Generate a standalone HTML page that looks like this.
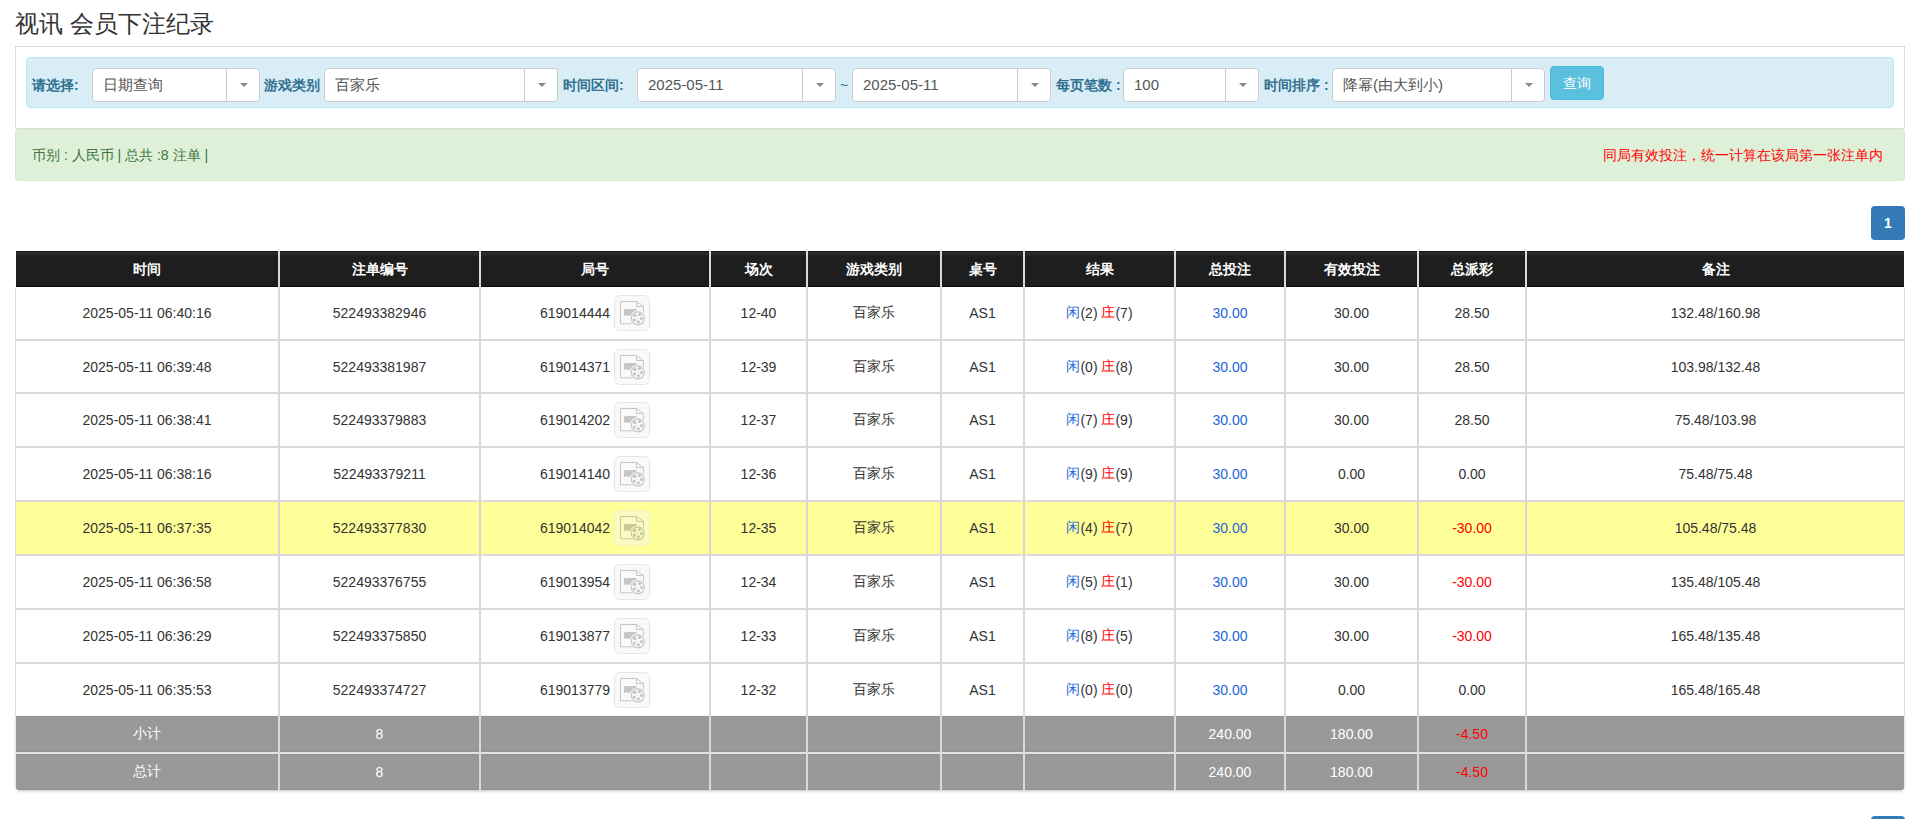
<!DOCTYPE html><html><head><meta charset="utf-8"><style>
*{box-sizing:border-box;margin:0;padding:0}
html,body{width:1913px;height:819px;overflow:hidden;background:#fff}
body{font-family:"Liberation Sans",sans-serif;color:#333;position:relative}
div,span.a{position:absolute}
.title{left:15px;top:8px;font-size:24px;line-height:32px;color:#333;white-space:nowrap}
.panel{left:15px;top:46px;width:1890px;height:83px;border:1px solid #ddd}
.bar{left:26px;top:57px;width:1868px;height:51px;background:#d9edf7;border:1px solid #bce8f1;border-radius:4px}
.lbl{font-size:14px;font-weight:bold;color:#31708f;top:76px;line-height:18px;white-space:nowrap}
.sel{top:68px;height:34px;background:#fff;border:1px solid #ccc;border-radius:4px}
.sel .t{left:10px;top:0;line-height:32px;font-size:15px;color:#555;white-space:nowrap}
.sel .d{top:0;bottom:0;width:1px;background:#ccc}
.sel .ar{top:14px;width:0;height:0;border-left:4px solid transparent;border-right:4px solid transparent;border-top:4px solid #888}
.btn{left:1550px;top:66px;width:54px;height:34px;background:#5bc0de;border:1px solid #46b8da;border-radius:4px;color:#fff;font-size:14px;line-height:32px;text-align:center}
.alert{left:15px;top:129px;width:1890px;height:52px;background:#dff0d8;border:1px solid #d6e9c6;border-radius:4px}
.alert .l{left:16px;top:16px;font-size:14px;color:#3c763d;line-height:18px;white-space:nowrap}
.alert .r{right:21px;top:16px;font-size:14px;color:#f00;line-height:18px;white-space:nowrap}
.page{left:1871px;width:34px;height:34px;background:#337ab7;border-radius:4px;color:#fff;font-size:14px;font-weight:bold;text-align:center;line-height:34px}
.c{display:flex;align-items:center;justify-content:center;white-space:nowrap;font-size:14px;color:#333}
.hd{background:#1c1c1c;color:#fff;font-weight:bold}
.b{color:#1a66d9}.rd{color:#f00}
.g{color:#fff}
.hdt{color:#fff;font-weight:bold}
</style></head><body>
<div class="title">视讯 会员下注纪录</div>
<div class="panel"></div><div class="bar"></div>
<div class="lbl" style="left:32px">请选择:</div>
<div class="sel" style="left:92px;width:168px"><div class="t">日期查询</div><div class="d" style="left:133px"></div><span class="a ar" style="left:147px"></span></div>
<div class="lbl" style="left:264px">游戏类别</div>
<div class="sel" style="left:324px;width:234px"><div class="t">百家乐</div><div class="d" style="left:199px"></div><span class="a ar" style="left:213px"></span></div>
<div class="lbl" style="left:563px">时间区间:</div>
<div class="sel" style="left:637px;width:199px"><div class="t">2025-05-11</div><div class="d" style="left:164px"></div><span class="a ar" style="left:178px"></span></div>
<div class="lbl" style="left:840px;font-weight:normal">~</div>
<div class="sel" style="left:852px;width:199px"><div class="t">2025-05-11</div><div class="d" style="left:164px"></div><span class="a ar" style="left:178px"></span></div>
<div class="lbl" style="left:1056px">每页笔数 :</div>
<div class="sel" style="left:1123px;width:136px"><div class="t">100</div><div class="d" style="left:101px"></div><span class="a ar" style="left:115px"></span></div>
<div class="lbl" style="left:1264px">时间排序 :</div>
<div class="sel" style="left:1332px;width:213px"><div class="t">降幂(由大到小)</div><div class="d" style="left:178px"></div><span class="a ar" style="left:192px"></span></div>
<div class="btn">查询</div>
<div class="alert"><div class="l">币别 : 人民币 | 总共 :8 注单 |</div><div class="r">同局有效投注，统一计算在该局第一张注单内</div></div>
<div class="page" style="top:206px">1</div>
<div class="page" style="top:816px">1</div>
<div style="left:15px;top:287px;width:1px;height:429px;background:#dcdcdc"></div>
<div style="left:1904px;top:287px;width:1px;height:429px;background:#dcdcdc"></div>
<div style="left:16px;top:251px;width:1888px;height:36px;background:linear-gradient(#2a2a2a 0,#2a2a2a 2px,#1e1e1e 4px);border-top:1px solid #151515;border-bottom:1px solid #0c0c0c"></div>
<div style="left:16px;top:502px;width:1888px;height:52px;background:#ffff99"></div>
<div style="left:16px;top:716px;width:1888px;height:74px;background:#999;box-shadow:0 1px 3px rgba(0,0,0,.25),inset 0 1px 0 #929292,inset 0 -1px 0 #929292;border-radius:0 0 4px 4px"></div>
<div style="left:16px;top:339px;width:1888px;height:2px;background:#d9d9d9"></div>
<div style="left:16px;top:392px;width:1888px;height:2px;background:#d9d9d9"></div>
<div style="left:16px;top:446px;width:1888px;height:2px;background:#d9d9d9"></div>
<div style="left:16px;top:500px;width:1888px;height:2px;background:#d9d9d9"></div>
<div style="left:16px;top:554px;width:1888px;height:2px;background:#d9d9d9"></div>
<div style="left:16px;top:608px;width:1888px;height:2px;background:#d9d9d9"></div>
<div style="left:16px;top:662px;width:1888px;height:2px;background:#d9d9d9"></div>
<div style="left:16px;top:752px;width:1888px;height:2px;background:#e3e3e3;box-shadow:0 -1px 0 #929292,0 1px 0 #929292"></div>
<div style="left:278px;top:251px;width:2px;height:539px;background:#d9d9d9"></div>
<div style="left:479px;top:251px;width:2px;height:539px;background:#d9d9d9"></div>
<div style="left:709px;top:251px;width:2px;height:539px;background:#d9d9d9"></div>
<div style="left:806px;top:251px;width:2px;height:539px;background:#d9d9d9"></div>
<div style="left:940px;top:251px;width:2px;height:539px;background:#d9d9d9"></div>
<div style="left:1023px;top:251px;width:2px;height:539px;background:#d9d9d9"></div>
<div style="left:1174px;top:251px;width:2px;height:539px;background:#d9d9d9"></div>
<div style="left:1284px;top:251px;width:2px;height:539px;background:#d9d9d9"></div>
<div style="left:1417px;top:251px;width:2px;height:539px;background:#d9d9d9"></div>
<div style="left:1525px;top:251px;width:2px;height:539px;background:#d9d9d9"></div>
<div class="c hdt" style="left:16px;top:252px;width:262px;height:36px">时间</div>
<div class="c hdt" style="left:280px;top:252px;width:199px;height:36px">注单编号</div>
<div class="c hdt" style="left:481px;top:252px;width:228px;height:36px">局号</div>
<div class="c hdt" style="left:711px;top:252px;width:95px;height:36px">场次</div>
<div class="c hdt" style="left:808px;top:252px;width:132px;height:36px">游戏类别</div>
<div class="c hdt" style="left:942px;top:252px;width:81px;height:36px">桌号</div>
<div class="c hdt" style="left:1025px;top:252px;width:149px;height:36px">结果</div>
<div class="c hdt" style="left:1176px;top:252px;width:108px;height:36px">总投注</div>
<div class="c hdt" style="left:1286px;top:252px;width:131px;height:36px">有效投注</div>
<div class="c hdt" style="left:1419px;top:252px;width:106px;height:36px">总派彩</div>
<div class="c hdt" style="left:1527px;top:252px;width:377px;height:36px">备注</div>
<div class="c " style="left:16px;top:287px;width:262px;height:52px">2025-05-11 06:40:16</div>
<div class="c " style="left:280px;top:287px;width:199px;height:52px">522493382946</div>
<div class="c " style="left:481px;top:287px;width:228px;height:52px">619014444<svg width="36" height="36" viewBox="0 0 36 36" style="margin-left:4px;flex:none">
<rect x="0.5" y="0.5" width="35" height="35" rx="5" fill="#f9f9f9" stroke="#e5e5e5"/>
<path d="M6.5 6.5H22.5L29.5 11.5V28.8H6.5Z" fill="#f9f9f9" stroke="#c6c6c6" stroke-width="1"/>
<path d="M22.5 6.5V11.5H29.5" fill="none" stroke="#c6c6c6" stroke-width="1"/>
<path d="M10 13.5L12.2 15V14H22.6V20.8H12.2V19.8L10 21.2Z" fill="#c6c6c6"/>
<circle cx="23.8" cy="23.4" r="8" fill="#f9f9f9"/><circle cx="23.8" cy="23.4" r="6.5" fill="#f9f9f9" stroke="#c6c6c6" stroke-width="1.1"/>
<circle cx="20.9" cy="20.5" r="1.65" fill="#c6c6c6"/><circle cx="25.6" cy="19.6" r="1.65" fill="#c6c6c6"/>
<circle cx="27.6" cy="23.6" r="1.65" fill="#c6c6c6"/><circle cx="24.3" cy="26.9" r="1.65" fill="#c6c6c6"/>
<circle cx="20.3" cy="25.1" r="1.65" fill="#c6c6c6"/><circle cx="23.8" cy="23.2" r="0.5" fill="#c6c6c6"/>
</svg></div>
<div class="c " style="left:711px;top:287px;width:95px;height:52px">12-40</div>
<div class="c " style="left:808px;top:287px;width:132px;height:52px">百家乐</div>
<div class="c " style="left:942px;top:287px;width:81px;height:52px">AS1</div>
<div class="c " style="left:1025px;top:287px;width:149px;height:52px"><span class="b">闲</span>(2)&nbsp;<span class="rd">庄</span>(7)</div>
<div class="c " style="left:1176px;top:287px;width:108px;height:52px"><span class="b">30.00</span></div>
<div class="c " style="left:1286px;top:287px;width:131px;height:52px">30.00</div>
<div class="c " style="left:1419px;top:287px;width:106px;height:52px">28.50</div>
<div class="c " style="left:1527px;top:287px;width:377px;height:52px">132.48/160.98</div>
<div class="c " style="left:16px;top:341px;width:262px;height:51px">2025-05-11 06:39:48</div>
<div class="c " style="left:280px;top:341px;width:199px;height:51px">522493381987</div>
<div class="c " style="left:481px;top:341px;width:228px;height:51px">619014371<svg width="36" height="36" viewBox="0 0 36 36" style="margin-left:4px;flex:none">
<rect x="0.5" y="0.5" width="35" height="35" rx="5" fill="#f9f9f9" stroke="#e5e5e5"/>
<path d="M6.5 6.5H22.5L29.5 11.5V28.8H6.5Z" fill="#f9f9f9" stroke="#c6c6c6" stroke-width="1"/>
<path d="M22.5 6.5V11.5H29.5" fill="none" stroke="#c6c6c6" stroke-width="1"/>
<path d="M10 13.5L12.2 15V14H22.6V20.8H12.2V19.8L10 21.2Z" fill="#c6c6c6"/>
<circle cx="23.8" cy="23.4" r="8" fill="#f9f9f9"/><circle cx="23.8" cy="23.4" r="6.5" fill="#f9f9f9" stroke="#c6c6c6" stroke-width="1.1"/>
<circle cx="20.9" cy="20.5" r="1.65" fill="#c6c6c6"/><circle cx="25.6" cy="19.6" r="1.65" fill="#c6c6c6"/>
<circle cx="27.6" cy="23.6" r="1.65" fill="#c6c6c6"/><circle cx="24.3" cy="26.9" r="1.65" fill="#c6c6c6"/>
<circle cx="20.3" cy="25.1" r="1.65" fill="#c6c6c6"/><circle cx="23.8" cy="23.2" r="0.5" fill="#c6c6c6"/>
</svg></div>
<div class="c " style="left:711px;top:341px;width:95px;height:51px">12-39</div>
<div class="c " style="left:808px;top:341px;width:132px;height:51px">百家乐</div>
<div class="c " style="left:942px;top:341px;width:81px;height:51px">AS1</div>
<div class="c " style="left:1025px;top:341px;width:149px;height:51px"><span class="b">闲</span>(0)&nbsp;<span class="rd">庄</span>(8)</div>
<div class="c " style="left:1176px;top:341px;width:108px;height:51px"><span class="b">30.00</span></div>
<div class="c " style="left:1286px;top:341px;width:131px;height:51px">30.00</div>
<div class="c " style="left:1419px;top:341px;width:106px;height:51px">28.50</div>
<div class="c " style="left:1527px;top:341px;width:377px;height:51px">103.98/132.48</div>
<div class="c " style="left:16px;top:394px;width:262px;height:52px">2025-05-11 06:38:41</div>
<div class="c " style="left:280px;top:394px;width:199px;height:52px">522493379883</div>
<div class="c " style="left:481px;top:394px;width:228px;height:52px">619014202<svg width="36" height="36" viewBox="0 0 36 36" style="margin-left:4px;flex:none">
<rect x="0.5" y="0.5" width="35" height="35" rx="5" fill="#f9f9f9" stroke="#e5e5e5"/>
<path d="M6.5 6.5H22.5L29.5 11.5V28.8H6.5Z" fill="#f9f9f9" stroke="#c6c6c6" stroke-width="1"/>
<path d="M22.5 6.5V11.5H29.5" fill="none" stroke="#c6c6c6" stroke-width="1"/>
<path d="M10 13.5L12.2 15V14H22.6V20.8H12.2V19.8L10 21.2Z" fill="#c6c6c6"/>
<circle cx="23.8" cy="23.4" r="8" fill="#f9f9f9"/><circle cx="23.8" cy="23.4" r="6.5" fill="#f9f9f9" stroke="#c6c6c6" stroke-width="1.1"/>
<circle cx="20.9" cy="20.5" r="1.65" fill="#c6c6c6"/><circle cx="25.6" cy="19.6" r="1.65" fill="#c6c6c6"/>
<circle cx="27.6" cy="23.6" r="1.65" fill="#c6c6c6"/><circle cx="24.3" cy="26.9" r="1.65" fill="#c6c6c6"/>
<circle cx="20.3" cy="25.1" r="1.65" fill="#c6c6c6"/><circle cx="23.8" cy="23.2" r="0.5" fill="#c6c6c6"/>
</svg></div>
<div class="c " style="left:711px;top:394px;width:95px;height:52px">12-37</div>
<div class="c " style="left:808px;top:394px;width:132px;height:52px">百家乐</div>
<div class="c " style="left:942px;top:394px;width:81px;height:52px">AS1</div>
<div class="c " style="left:1025px;top:394px;width:149px;height:52px"><span class="b">闲</span>(7)&nbsp;<span class="rd">庄</span>(9)</div>
<div class="c " style="left:1176px;top:394px;width:108px;height:52px"><span class="b">30.00</span></div>
<div class="c " style="left:1286px;top:394px;width:131px;height:52px">30.00</div>
<div class="c " style="left:1419px;top:394px;width:106px;height:52px">28.50</div>
<div class="c " style="left:1527px;top:394px;width:377px;height:52px">75.48/103.98</div>
<div class="c " style="left:16px;top:448px;width:262px;height:52px">2025-05-11 06:38:16</div>
<div class="c " style="left:280px;top:448px;width:199px;height:52px">522493379211</div>
<div class="c " style="left:481px;top:448px;width:228px;height:52px">619014140<svg width="36" height="36" viewBox="0 0 36 36" style="margin-left:4px;flex:none">
<rect x="0.5" y="0.5" width="35" height="35" rx="5" fill="#f9f9f9" stroke="#e5e5e5"/>
<path d="M6.5 6.5H22.5L29.5 11.5V28.8H6.5Z" fill="#f9f9f9" stroke="#c6c6c6" stroke-width="1"/>
<path d="M22.5 6.5V11.5H29.5" fill="none" stroke="#c6c6c6" stroke-width="1"/>
<path d="M10 13.5L12.2 15V14H22.6V20.8H12.2V19.8L10 21.2Z" fill="#c6c6c6"/>
<circle cx="23.8" cy="23.4" r="8" fill="#f9f9f9"/><circle cx="23.8" cy="23.4" r="6.5" fill="#f9f9f9" stroke="#c6c6c6" stroke-width="1.1"/>
<circle cx="20.9" cy="20.5" r="1.65" fill="#c6c6c6"/><circle cx="25.6" cy="19.6" r="1.65" fill="#c6c6c6"/>
<circle cx="27.6" cy="23.6" r="1.65" fill="#c6c6c6"/><circle cx="24.3" cy="26.9" r="1.65" fill="#c6c6c6"/>
<circle cx="20.3" cy="25.1" r="1.65" fill="#c6c6c6"/><circle cx="23.8" cy="23.2" r="0.5" fill="#c6c6c6"/>
</svg></div>
<div class="c " style="left:711px;top:448px;width:95px;height:52px">12-36</div>
<div class="c " style="left:808px;top:448px;width:132px;height:52px">百家乐</div>
<div class="c " style="left:942px;top:448px;width:81px;height:52px">AS1</div>
<div class="c " style="left:1025px;top:448px;width:149px;height:52px"><span class="b">闲</span>(9)&nbsp;<span class="rd">庄</span>(9)</div>
<div class="c " style="left:1176px;top:448px;width:108px;height:52px"><span class="b">30.00</span></div>
<div class="c " style="left:1286px;top:448px;width:131px;height:52px">0.00</div>
<div class="c " style="left:1419px;top:448px;width:106px;height:52px">0.00</div>
<div class="c " style="left:1527px;top:448px;width:377px;height:52px">75.48/75.48</div>
<div class="c " style="left:16px;top:502px;width:262px;height:52px">2025-05-11 06:37:35</div>
<div class="c " style="left:280px;top:502px;width:199px;height:52px">522493377830</div>
<div class="c " style="left:481px;top:502px;width:228px;height:52px">619014042<svg width="36" height="36" viewBox="0 0 36 36" style="margin-left:4px;flex:none">
<rect x="0.5" y="0.5" width="35" height="35" rx="5" fill="#fafac2" stroke="#f0f0b0"/>
<path d="M6.5 6.5H22.5L29.5 11.5V28.8H6.5Z" fill="#fafac2" stroke="#c8c898" stroke-width="1"/>
<path d="M22.5 6.5V11.5H29.5" fill="none" stroke="#c8c898" stroke-width="1"/>
<path d="M10 13.5L12.2 15V14H22.6V20.8H12.2V19.8L10 21.2Z" fill="#c8c898"/>
<circle cx="23.8" cy="23.4" r="8" fill="#fafac2"/><circle cx="23.8" cy="23.4" r="6.5" fill="#fafac2" stroke="#c8c898" stroke-width="1.1"/>
<circle cx="20.9" cy="20.5" r="1.65" fill="#c8c898"/><circle cx="25.6" cy="19.6" r="1.65" fill="#c8c898"/>
<circle cx="27.6" cy="23.6" r="1.65" fill="#c8c898"/><circle cx="24.3" cy="26.9" r="1.65" fill="#c8c898"/>
<circle cx="20.3" cy="25.1" r="1.65" fill="#c8c898"/><circle cx="23.8" cy="23.2" r="0.5" fill="#c8c898"/>
</svg></div>
<div class="c " style="left:711px;top:502px;width:95px;height:52px">12-35</div>
<div class="c " style="left:808px;top:502px;width:132px;height:52px">百家乐</div>
<div class="c " style="left:942px;top:502px;width:81px;height:52px">AS1</div>
<div class="c " style="left:1025px;top:502px;width:149px;height:52px"><span class="b">闲</span>(4)&nbsp;<span class="rd">庄</span>(7)</div>
<div class="c " style="left:1176px;top:502px;width:108px;height:52px"><span class="b">30.00</span></div>
<div class="c " style="left:1286px;top:502px;width:131px;height:52px">30.00</div>
<div class="c " style="left:1419px;top:502px;width:106px;height:52px"><span class="rd">-30.00</span></div>
<div class="c " style="left:1527px;top:502px;width:377px;height:52px">105.48/75.48</div>
<div class="c " style="left:16px;top:556px;width:262px;height:52px">2025-05-11 06:36:58</div>
<div class="c " style="left:280px;top:556px;width:199px;height:52px">522493376755</div>
<div class="c " style="left:481px;top:556px;width:228px;height:52px">619013954<svg width="36" height="36" viewBox="0 0 36 36" style="margin-left:4px;flex:none">
<rect x="0.5" y="0.5" width="35" height="35" rx="5" fill="#f9f9f9" stroke="#e5e5e5"/>
<path d="M6.5 6.5H22.5L29.5 11.5V28.8H6.5Z" fill="#f9f9f9" stroke="#c6c6c6" stroke-width="1"/>
<path d="M22.5 6.5V11.5H29.5" fill="none" stroke="#c6c6c6" stroke-width="1"/>
<path d="M10 13.5L12.2 15V14H22.6V20.8H12.2V19.8L10 21.2Z" fill="#c6c6c6"/>
<circle cx="23.8" cy="23.4" r="8" fill="#f9f9f9"/><circle cx="23.8" cy="23.4" r="6.5" fill="#f9f9f9" stroke="#c6c6c6" stroke-width="1.1"/>
<circle cx="20.9" cy="20.5" r="1.65" fill="#c6c6c6"/><circle cx="25.6" cy="19.6" r="1.65" fill="#c6c6c6"/>
<circle cx="27.6" cy="23.6" r="1.65" fill="#c6c6c6"/><circle cx="24.3" cy="26.9" r="1.65" fill="#c6c6c6"/>
<circle cx="20.3" cy="25.1" r="1.65" fill="#c6c6c6"/><circle cx="23.8" cy="23.2" r="0.5" fill="#c6c6c6"/>
</svg></div>
<div class="c " style="left:711px;top:556px;width:95px;height:52px">12-34</div>
<div class="c " style="left:808px;top:556px;width:132px;height:52px">百家乐</div>
<div class="c " style="left:942px;top:556px;width:81px;height:52px">AS1</div>
<div class="c " style="left:1025px;top:556px;width:149px;height:52px"><span class="b">闲</span>(5)&nbsp;<span class="rd">庄</span>(1)</div>
<div class="c " style="left:1176px;top:556px;width:108px;height:52px"><span class="b">30.00</span></div>
<div class="c " style="left:1286px;top:556px;width:131px;height:52px">30.00</div>
<div class="c " style="left:1419px;top:556px;width:106px;height:52px"><span class="rd">-30.00</span></div>
<div class="c " style="left:1527px;top:556px;width:377px;height:52px">135.48/105.48</div>
<div class="c " style="left:16px;top:610px;width:262px;height:52px">2025-05-11 06:36:29</div>
<div class="c " style="left:280px;top:610px;width:199px;height:52px">522493375850</div>
<div class="c " style="left:481px;top:610px;width:228px;height:52px">619013877<svg width="36" height="36" viewBox="0 0 36 36" style="margin-left:4px;flex:none">
<rect x="0.5" y="0.5" width="35" height="35" rx="5" fill="#f9f9f9" stroke="#e5e5e5"/>
<path d="M6.5 6.5H22.5L29.5 11.5V28.8H6.5Z" fill="#f9f9f9" stroke="#c6c6c6" stroke-width="1"/>
<path d="M22.5 6.5V11.5H29.5" fill="none" stroke="#c6c6c6" stroke-width="1"/>
<path d="M10 13.5L12.2 15V14H22.6V20.8H12.2V19.8L10 21.2Z" fill="#c6c6c6"/>
<circle cx="23.8" cy="23.4" r="8" fill="#f9f9f9"/><circle cx="23.8" cy="23.4" r="6.5" fill="#f9f9f9" stroke="#c6c6c6" stroke-width="1.1"/>
<circle cx="20.9" cy="20.5" r="1.65" fill="#c6c6c6"/><circle cx="25.6" cy="19.6" r="1.65" fill="#c6c6c6"/>
<circle cx="27.6" cy="23.6" r="1.65" fill="#c6c6c6"/><circle cx="24.3" cy="26.9" r="1.65" fill="#c6c6c6"/>
<circle cx="20.3" cy="25.1" r="1.65" fill="#c6c6c6"/><circle cx="23.8" cy="23.2" r="0.5" fill="#c6c6c6"/>
</svg></div>
<div class="c " style="left:711px;top:610px;width:95px;height:52px">12-33</div>
<div class="c " style="left:808px;top:610px;width:132px;height:52px">百家乐</div>
<div class="c " style="left:942px;top:610px;width:81px;height:52px">AS1</div>
<div class="c " style="left:1025px;top:610px;width:149px;height:52px"><span class="b">闲</span>(8)&nbsp;<span class="rd">庄</span>(5)</div>
<div class="c " style="left:1176px;top:610px;width:108px;height:52px"><span class="b">30.00</span></div>
<div class="c " style="left:1286px;top:610px;width:131px;height:52px">30.00</div>
<div class="c " style="left:1419px;top:610px;width:106px;height:52px"><span class="rd">-30.00</span></div>
<div class="c " style="left:1527px;top:610px;width:377px;height:52px">165.48/135.48</div>
<div class="c " style="left:16px;top:664px;width:262px;height:52px">2025-05-11 06:35:53</div>
<div class="c " style="left:280px;top:664px;width:199px;height:52px">522493374727</div>
<div class="c " style="left:481px;top:664px;width:228px;height:52px">619013779<svg width="36" height="36" viewBox="0 0 36 36" style="margin-left:4px;flex:none">
<rect x="0.5" y="0.5" width="35" height="35" rx="5" fill="#f9f9f9" stroke="#e5e5e5"/>
<path d="M6.5 6.5H22.5L29.5 11.5V28.8H6.5Z" fill="#f9f9f9" stroke="#c6c6c6" stroke-width="1"/>
<path d="M22.5 6.5V11.5H29.5" fill="none" stroke="#c6c6c6" stroke-width="1"/>
<path d="M10 13.5L12.2 15V14H22.6V20.8H12.2V19.8L10 21.2Z" fill="#c6c6c6"/>
<circle cx="23.8" cy="23.4" r="8" fill="#f9f9f9"/><circle cx="23.8" cy="23.4" r="6.5" fill="#f9f9f9" stroke="#c6c6c6" stroke-width="1.1"/>
<circle cx="20.9" cy="20.5" r="1.65" fill="#c6c6c6"/><circle cx="25.6" cy="19.6" r="1.65" fill="#c6c6c6"/>
<circle cx="27.6" cy="23.6" r="1.65" fill="#c6c6c6"/><circle cx="24.3" cy="26.9" r="1.65" fill="#c6c6c6"/>
<circle cx="20.3" cy="25.1" r="1.65" fill="#c6c6c6"/><circle cx="23.8" cy="23.2" r="0.5" fill="#c6c6c6"/>
</svg></div>
<div class="c " style="left:711px;top:664px;width:95px;height:52px">12-32</div>
<div class="c " style="left:808px;top:664px;width:132px;height:52px">百家乐</div>
<div class="c " style="left:942px;top:664px;width:81px;height:52px">AS1</div>
<div class="c " style="left:1025px;top:664px;width:149px;height:52px"><span class="b">闲</span>(0)&nbsp;<span class="rd">庄</span>(0)</div>
<div class="c " style="left:1176px;top:664px;width:108px;height:52px"><span class="b">30.00</span></div>
<div class="c " style="left:1286px;top:664px;width:131px;height:52px">0.00</div>
<div class="c " style="left:1419px;top:664px;width:106px;height:52px">0.00</div>
<div class="c " style="left:1527px;top:664px;width:377px;height:52px">165.48/165.48</div>
<div class="c g" style="left:16px;top:716px;width:262px;height:36px">小计</div>
<div class="c g" style="left:280px;top:716px;width:199px;height:36px">8</div>
<div class="c g" style="left:1176px;top:716px;width:108px;height:36px">240.00</div>
<div class="c g" style="left:1286px;top:716px;width:131px;height:36px">180.00</div>
<div class="c g" style="left:1419px;top:716px;width:106px;height:36px"><span class="rd">-4.50</span></div>
<div class="c g" style="left:16px;top:754px;width:262px;height:36px">总计</div>
<div class="c g" style="left:280px;top:754px;width:199px;height:36px">8</div>
<div class="c g" style="left:1176px;top:754px;width:108px;height:36px">240.00</div>
<div class="c g" style="left:1286px;top:754px;width:131px;height:36px">180.00</div>
<div class="c g" style="left:1419px;top:754px;width:106px;height:36px"><span class="rd">-4.50</span></div>
</body></html>
